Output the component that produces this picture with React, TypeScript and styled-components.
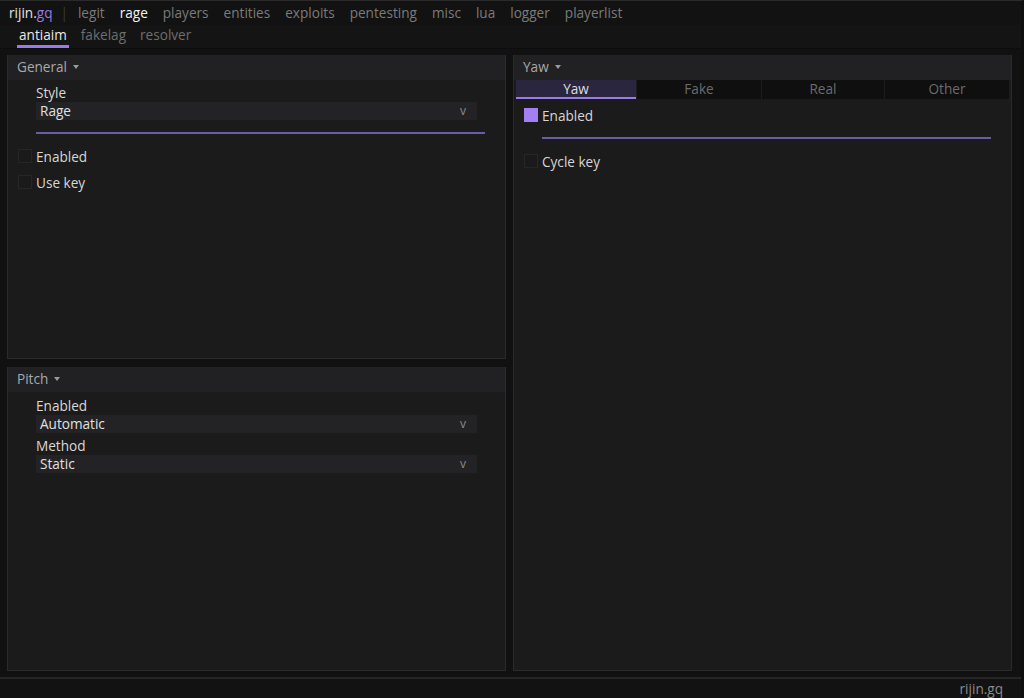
import React, { FC } from 'react'
import styled, { createGlobalStyle, css } from 'styled-components'

const accent = '#9a7ae6'

const GlobalStyle = createGlobalStyle`
  html, body {
    margin: 0;
    padding: 0;
    background: #111111;
    font-family: 'Open Sans', 'DejaVu Sans', sans-serif;
    font-size: 13.6px;
    color: #d6d6d6;
  }
  #root {
    height: 698px;
  }
`

const Shell = styled.div`
  display: flex;
  flex-direction: column;
  height: 698px;
  width: 1024px;
  background: #111111;
  border-top: 1px solid #2a2a2a;
  border-right: 3px solid #0c0f0c;
  box-sizing: border-box;
  overflow: hidden;
`

const TopBar = styled.nav`
  display: flex;
  align-items: center;
  height: 22px;
  padding: 0 9px 2px;
  gap: 15px;
  background: #121212;
`

const Brand = styled.span`
  color: #e4e4e4;
  > span {
    color: ${accent};
  }
`

const Divider = styled.span`
  color: #3a3a3a;
  margin: 0 -5px 0 -7px;
`

const TopItem = styled.span<{ $active?: boolean }>`
  color: ${({ $active }) => ($active ? '#f2f2f2' : '#7a7a7a')};
`

const SubBar = styled.nav`
  display: flex;
  align-items: flex-start;
  height: 23px;
  padding: 0 17px;
  gap: 10px;
  background: #141414;
  border-bottom: 1px solid #0d0d0d;
`

const SubItem = styled.span<{ $active?: boolean }>`
  line-height: 20px;
  padding: 0 2px;
  ${({ $active }) =>
    $active
      ? css`
          color: #e8e8e8;
          border-bottom: 3px solid ${accent};
        `
      : css`
          color: #6e6e6e;
        `}
`

const Main = styled.main`
  flex: 1;
  display: grid;
  grid-template-columns: 499px 499px;
  gap: 7px;
  padding: 6px 9px 6px 7px;
  min-height: 0;
`

const Column = styled.div`
  display: flex;
  flex-direction: column;
  gap: 8px;
  min-height: 0;
`

const Panel = styled.section`
  flex: 1;
  display: flex;
  flex-direction: column;
  background: #1b1b1b;
  border: 1px solid #2a2a2a;
  border-top: none;
  min-height: 0;
`

const PanelHeader = styled.header`
  display: flex;
  align-items: center;
  gap: 6px;
  height: 22px;
  padding: 0 9px 3px;
  background: #212123;
  color: #a8a8a8;
`

const Caret = styled.span`
  width: 0;
  height: 0;
  border-left: 3px solid transparent;
  border-right: 3px solid transparent;
  border-top: 4px solid #9a9a9a;
  margin-top: 1px;
`

const PanelBody = styled.div<{ $top?: number }>`
  display: flex;
  flex-direction: column;
  padding: ${({ $top = 4 }) => $top}px 10px 0 10px;
`

const Field = styled.div`
  display: flex;
  flex-direction: column;
  gap: 1px;
  padding-left: 18px;
  width: 441px;
  margin-bottom: 4px;
`

const Label = styled.span`
  color: #d8d8d8;
  line-height: 17px;
`

const Select = styled.div`
  display: flex;
  justify-content: space-between;
  align-items: center;
  height: 18px;
  padding: 0 11px 0 4px;
  background: #232326;
  color: #e0e0e0;
  line-height: 18px;

  > i {
    font-style: normal;
    font-size: 12px;
    color: #8a8a8a;
  }
`

const Slider = styled.div<{ $width: number }>`
  height: 2px;
  width: ${({ $width }) => $width}px;
  margin-left: 18px;
  background: #6c5ba6;
`

const CheckRow = styled.label`
  display: flex;
  align-items: center;
  gap: 4px;
  height: 16px;
  color: #d6d6d6;
`

const Box = styled.span<{ $checked?: boolean }>`
  width: 14px;
  height: 14px;
  box-sizing: border-box;
  background: ${({ $checked }) => ($checked ? '#a27ff2' : '#1a1a1a')};
  border: 1px solid ${({ $checked }) => ($checked ? '#a27ff2' : '#262626')};
`

const Tabs = styled.div`
  display: grid;
  grid-template-columns: 120px 125px 123px 1fr;
  height: 19px;
  margin: 0 2px;
  background: #0f0f0f;
`

const Tab = styled.div<{ $active?: boolean }>`
  text-align: center;
  line-height: 17px;
  border-left: 1px solid #1c1c1c;
  ${({ $active }) =>
    $active
      ? css`
          background: #2b2640;
          color: #dedede;
          border-bottom: 2px solid ${accent};
          border-left: none;
        `
      : css`
          color: #6c6c6c;
        `}
`

const Footer = styled.footer`
  display: flex;
  justify-content: flex-end;
  align-items: center;
  height: 18px;
  padding: 0 18px 1px;
  background: #121212;
  border-top: 2px solid #262626;
  color: #8a8a8a;
`

const Spacer = styled.div<{ $h: number }>`
  height: ${({ $h }) => $h}px;
  flex: none;
`

const SelectField: FC<{ label: string; value: string }> = ({ label, value }) => (
  <Field>
    <Label>{label}</Label>
    <Select>
      {value}
      <i>v</i>
    </Select>
  </Field>
)

const Checkbox: FC<{ label: string; checked?: boolean }> = ({ label, checked }) => (
  <CheckRow>
    <Box $checked={checked} />
    {label}
  </CheckRow>
)

const topItems = ['legit', 'rage', 'players', 'entities', 'exploits', 'pentesting', 'misc', 'lua', 'logger', 'playerlist']

const App: FC = () => {
  return (
    <>
      <GlobalStyle />
      <Shell>
        <TopBar>
          <Brand>
            rijin.<span>gq</span>
          </Brand>
          <Divider>|</Divider>
          {topItems.map((t) => (
            <TopItem key={t} $active={t === 'rage'}>
              {t}
            </TopItem>
          ))}
        </TopBar>
        <SubBar>
          <SubItem $active>antiaim</SubItem>
          <SubItem>fakelag</SubItem>
          <SubItem>resolver</SubItem>
        </SubBar>
        <Main>
          <Column>
            <Panel>
              <PanelHeader>
                General <Caret />
              </PanelHeader>
              <PanelBody>
                <SelectField label="Style" value="Rage" />
                <Spacer $h={8} />
                <Slider $width={449} />
                <Spacer $h={14} />
                <Checkbox label="Enabled" />
                <Spacer $h={10} />
                <Checkbox label="Use key" />
              </PanelBody>
            </Panel>
            <Panel>
              <PanelHeader>
                Pitch <Caret />
              </PanelHeader>
              <PanelBody $top={5}>
                <SelectField label="Enabled" value="Automatic" />
                <SelectField label="Method" value="Static" />
              </PanelBody>
            </Panel>
          </Column>
          <Column>
            <Panel>
              <PanelHeader>
                Yaw <Caret />
              </PanelHeader>
              <Tabs>
                <Tab $active>Yaw</Tab>
                <Tab>Fake</Tab>
                <Tab>Real</Tab>
                <Tab>Other</Tab>
              </Tabs>
              <PanelBody $top={8}>
                <Checkbox label="Enabled" checked />
                <Spacer $h={14} />
                <Slider $width={449} />
                <Spacer $h={14} />
                <Checkbox label="Cycle key" />
              </PanelBody>
            </Panel>
          </Column>
        </Main>
        <Footer>rijin.gq</Footer>
      </Shell>
    </>
  )
}

export default App
